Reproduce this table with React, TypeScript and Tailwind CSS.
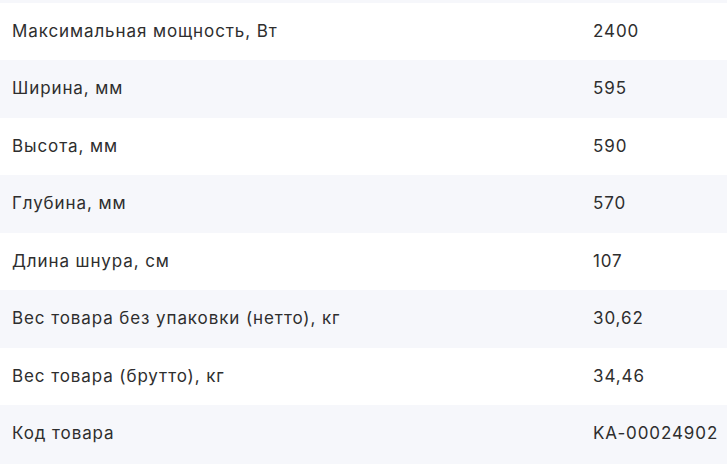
import React from 'react'

const specs: [string, string][] = [
  ['Максимальная мощность, Вт', '2400'],
  ['Ширина, мм', '595'],
  ['Высота, мм', '590'],
  ['Глубина, мм', '570'],
  ['Длина шнура, см', '107'],
  ['Вес товара без упаковки (нетто), кг', '30,62'],
  ['Вес товара (брутто), кг', '34,46'],
  ['Код товара', 'KA-00024902'],
]

export default function App() {
  return (
    <div
      className="w-[727px] h-[464px] overflow-hidden bg-[#f6f7fb] text-[#2e2e2e]"
      style={{ fontFamily: 'Inter, "Noto Sans", sans-serif' }}
    >
      {/* previous row peeking in at the top */}
      <div className="h-[2.5px] bg-[#f6f7fb]" />
      {specs.map(([name, value], i) => (
        <div
          key={name}
          className={
            'flex items-center h-[57.5px] text-[17px] tracking-[0.9px] ' +
            (i % 2 === 0 ? 'bg-white' : 'bg-[#f6f7fb]')
          }
        >
          <span className="pl-3 w-[593px]">{name}</span>
          <span>{value}</span>
        </div>
      ))}
    </div>
  )
}
